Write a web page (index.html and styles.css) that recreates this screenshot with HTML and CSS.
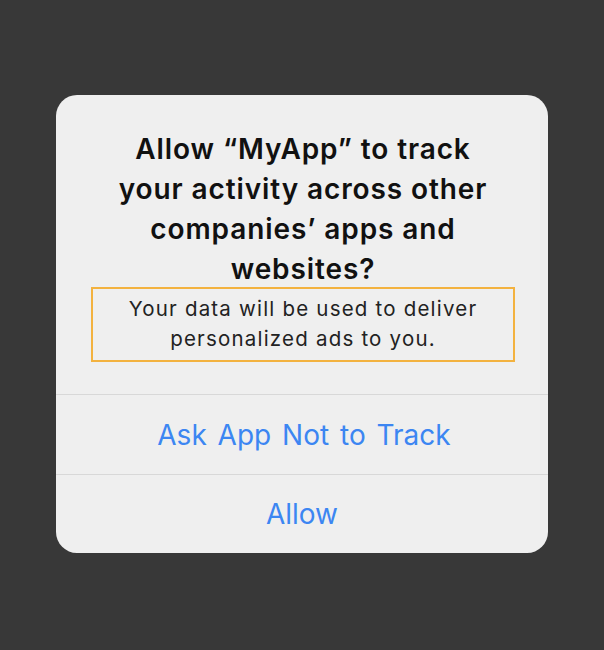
FILE: index.html
```html
<!DOCTYPE html>
<html>
<head>
<meta charset="utf-8">
<link rel="stylesheet" href="styles.css">
</head>
<body>
<div class="alert">
  <div class="alert-body">
    <h1 class="alert-title">Allow “MyApp” to track<br>your activity across other<br>companies’ apps and<br>websites?</h1>
    <p class="alert-message">Your data will be used to deliver<br>personalized ads to you.</p>
  </div>
  <button class="alert-action">Ask App Not to Track</button>
  <button class="alert-action">Allow</button>
</div>
</body>
</html>
```

FILE: styles.css
```css
html, body {
  margin: 0;
  padding: 0;
}
body {
  width: 604px;
  height: 650px;
  background: #383838;
  display: flex;
  justify-content: center;
  align-items: flex-start;
  padding-top: 95px;
  box-sizing: border-box;
  font-family: Inter, "Noto Sans", sans-serif;
}
.alert {
  width: 492px;
  background: #efefef;
  border-radius: 21px;
  overflow: hidden;
  display: flex;
  flex-direction: column;
}
.alert-body {
  padding: 34px 33px 32px 35px;
  display: flex;
  flex-direction: column;
  align-items: center;
}
.alert-title {
  margin: 0;
  font-size: 28px;
  line-height: 40px;
  font-weight: 600;
  color: #111;
  text-align: center;
  letter-spacing: 0.9px;
  white-space: nowrap;
}
.alert-message {
  margin: 0;
  margin-top: -2px;
  width: 424px;
  box-sizing: border-box;
  border: 2px solid #f3b23f;
  padding: 5px 0 6px;
  font-size: 20.5px;
  line-height: 30px;
  color: #222;
  text-align: center;
  letter-spacing: 1.2px;
  white-space: nowrap;
}
.alert-action {
  height: 80px;
  border: 0;
  border-top: 1.5px solid #d8d8d8;
  background: transparent;
  font-family: inherit;
  font-size: 28px;
  word-spacing: 3px;
  color: #3c86f2;
  padding: 0 0 0 4px;
  cursor: pointer;
}
.alert-action:last-child {
  height: 79px;
  padding: 0;
}
```
